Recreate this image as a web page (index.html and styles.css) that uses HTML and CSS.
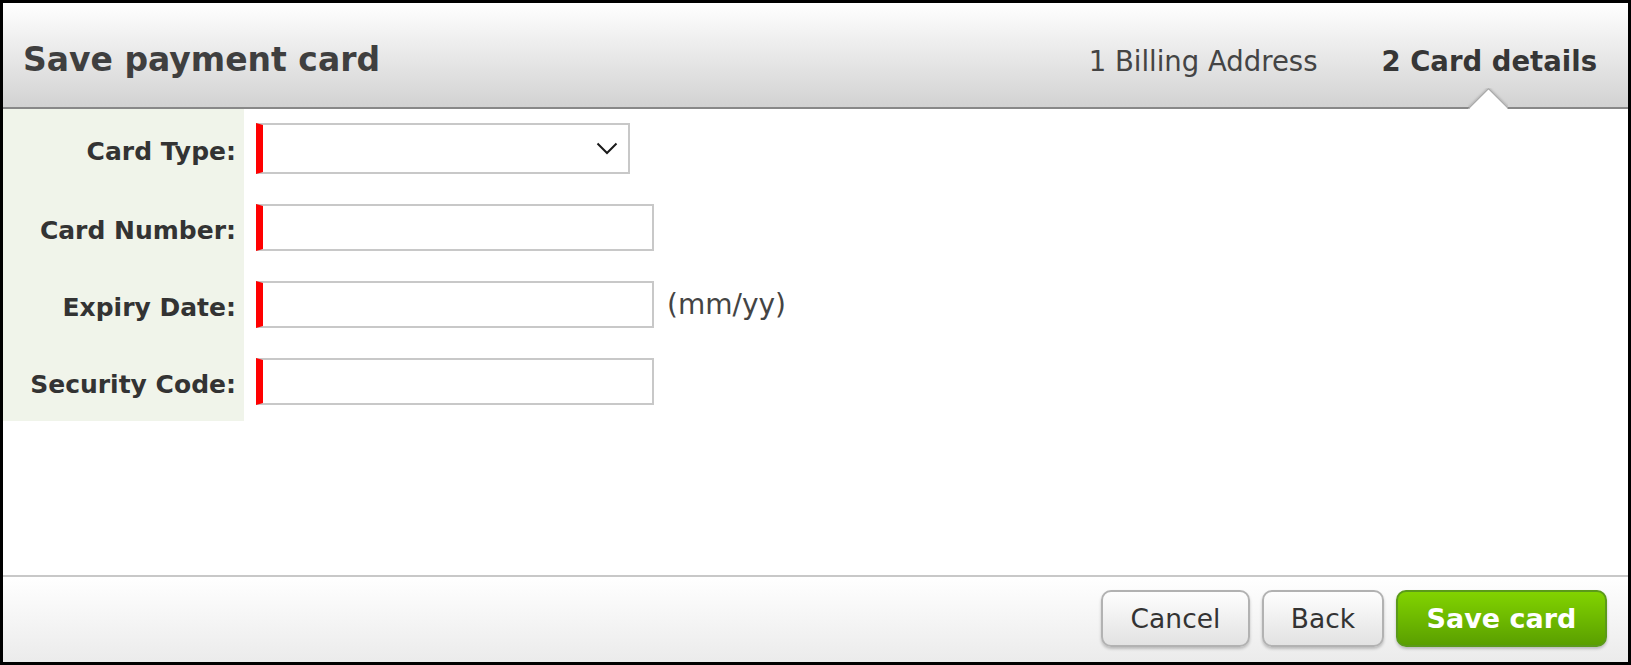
FILE: index.html
```html
<!DOCTYPE html>
<html lang="en">
<head>
<meta charset="utf-8">
<title>Save payment card</title>
<link rel="stylesheet" href="styles.css">
</head>
<body>
<div class="dialog">
  <header class="header">
    <h1 class="title">Save payment card</h1>
    <ol class="steps">
      <li class="step">1 Billing Address</li>
      <li class="step step-active">2 Card details</li>
    </ol>
    <span class="notch"></span>
  </header>
  <main class="content">
    <form class="form">
      <label class="label" for="ctype">Card Type:</label>
      <div class="field">
        <div class="select-wrap">
          <select id="ctype" class="select"><option></option></select>
          <svg class="chevron" width="22" height="13" viewBox="0 0 22 13"><path d="M1.5 1.5 L11 11 L20.5 1.5" fill="none" stroke="#1a1a1a" stroke-width="2"/></svg>
        </div>
      </div>
      <label class="label" for="cnum">Card Number:</label>
      <div class="field"><input id="cnum" class="input" type="text"></div>
      <label class="label" for="cexp">Expiry Date:</label>
      <div class="field"><input id="cexp" class="input" type="text"><span class="hint">(mm/yy)</span></div>
      <label class="label" for="csec">Security Code:</label>
      <div class="field"><input id="csec" class="input" type="text"></div>
    </form>
  </main>
  <footer class="footer">
    <button class="btn btn-cancel" type="button">Cancel</button>
    <button class="btn btn-back" type="button">Back</button>
    <button class="btn btn-primary" type="button">Save card</button>
  </footer>
</div>
</body>
</html>
```
FILE: styles.css
```css
* { box-sizing: border-box; }
html, body { margin: 0; padding: 0; background: #fff; }
body { font-family: "DejaVu Sans", Verdana, sans-serif; }

.dialog {
  width: 1631px;
  height: 665px;
  border: 3px solid #000;
  display: flex;
  flex-direction: column;
  background: #fff;
  overflow: hidden;
}

.header {
  position: relative;
  height: 106px;
  flex: none;
  display: flex;
  align-items: baseline;
  padding: 38px 31px 0 20px;
  background: linear-gradient(#ffffff, #d2d2d2);
  border-bottom: 2px solid #888;
}
.title {
  margin: 0;
  font-size: 33px;
  font-weight: bold;
  color: #3f3f3f;
  line-height: 1.164;
}
.steps {
  margin: 0 0 0 auto;
  padding: 0;
  list-style: none;
  display: flex;
  gap: 64px;
  font-size: 27.5px;
  color: #444;
}
.step-active { font-weight: bold; color: #363636; }

.notch {
  position: absolute;
  right: 120px;
  bottom: -2px;
  width: 40px;
  height: 21px;
  overflow: hidden;
}
.notch::before {
  content: "";
  position: absolute;
  left: 6px;
  top: 6px;
  width: 27px;
  height: 27px;
  background: #fff;
  border: 1px solid #a0a0a0;
  box-shadow: 0 0 3px rgba(0,0,0,0.35);
  transform: rotate(45deg);
}

.content { flex: 1; background: #fff; }

.form {
  display: grid;
  grid-template-columns: 241px 1fr;
}
.label {
  background: #f0f4ea;
  display: flex;
  align-items: center;
  justify-content: flex-end;
  padding: 20px 8px 16px 0;
  font-size: 25px;
  font-weight: bold;
  color: #333;
}
.field {
  display: flex;
  align-items: center;
  gap: 13px;
  padding: 14px 0 16px 12px;
}
.select-wrap { position: relative; width: 374px; height: 51px; }
.select {
  -webkit-appearance: none;
  appearance: none;
  display: block;
  width: 374px;
  height: 51px;
  margin: 0;
  border: 2px solid #c8c8c8;
  border-left: 7px solid #ff0000;
  border-radius: 0;
  background: #fff;
  font: inherit;
}
.chevron { position: absolute; right: 12px; top: 19px; }
.input {
  display: block;
  width: 398px;
  height: 47px;
  margin: 0;
  border: 2px solid #c8c8c8;
  border-left: 7px solid #ff0000;
  border-radius: 0;
  background: #fff;
  font: inherit;
  outline: none;
}
.hint { font-size: 28px; color: #444; }

.footer {
  flex: none;
  height: 87px;
  border-top: 2px solid #c8c8c8;
  background: linear-gradient(#ffffff, #ebebeb);
  display: flex;
  justify-content: flex-end;
  align-items: flex-start;
  gap: 12px;
  padding: 13px 21px 0 0;
}
.btn {
  height: 57px;
  margin: 0;
  padding: 0;
  border: 2px solid #b2b2b2;
  border-radius: 10px;
  background: linear-gradient(#fefefe, #e2e2e2);
  box-shadow: 0 2px 3px rgba(0,0,0,0.22);
  font-family: "DejaVu Sans", Verdana, sans-serif;
  font-size: 26.5px;
  color: #333;
}
.btn-cancel { width: 149px; }
.btn-back { width: 122px; }
.btn-primary {
  width: 211px;
  background: linear-gradient(#82d300, #5a9f00);
  border-color: #5b9a1a;
  color: #fff;
  font-weight: bold;
  font-size: 27px;
}
```
